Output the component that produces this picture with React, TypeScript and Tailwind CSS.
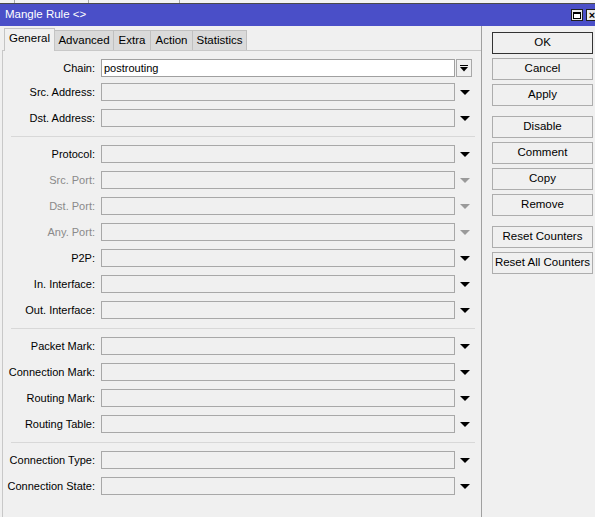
import React from "react";

type Row = { label: string; value?: string; disabled?: boolean; chain?: boolean };

const sections: Row[][] = [
  [
    { label: "Chain:", value: "postrouting", chain: true },
    { label: "Src. Address:" },
    { label: "Dst. Address:" },
  ],
  [
    { label: "Protocol:" },
    { label: "Src. Port:", disabled: true },
    { label: "Dst. Port:", disabled: true },
    { label: "Any. Port:", disabled: true },
    { label: "P2P:" },
    { label: "In. Interface:" },
    { label: "Out. Interface:" },
  ],
  [
    { label: "Packet Mark:" },
    { label: "Connection Mark:" },
    { label: "Routing Mark:" },
    { label: "Routing Table:" },
  ],
  [{ label: "Connection Type:" }, { label: "Connection State:" }],
];

const buttonGroups = [
  ["OK", "Cancel", "Apply"],
  ["Disable", "Comment", "Copy", "Remove"],
  ["Reset Counters", "Reset All Counters"],
];

function Arrow({ disabled }: { disabled?: boolean }) {
  return (
    <svg width="10" height="5" viewBox="0 0 10 5">
      <polygon points="0,0 10,0 5,5" fill={disabled ? "#9a9a9a" : "#000"} />
    </svg>
  );
}

function FieldRow({ row }: { row: Row }) {
  return (
    <div className={`flex h-[18px] items-center ${row.chain ? "mb-[-2px]" : ""}`}>
      <div
        className={`w-[93px] shrink-0 whitespace-nowrap pr-[1px] text-right text-[11px] leading-none ${
          row.disabled ? "text-[#8a8a8a]" : "text-black"
        }`}
      >
        {row.label}
      </div>
      <div
        className={`ml-[5px] flex h-[18px] w-[354px] items-center border px-[2px] text-[11px] ${
          row.chain ? "border-[#a0a0a0] bg-white" : "border-[#a8a8a8] bg-[#f0f0f0]"
        }`}
      >
        {row.value}
      </div>
      {row.chain ? (
        <div className="ml-[1px] flex h-[18px] w-[16px] items-center justify-center border border-[#a8a8a8] bg-[#f0f0f0]">
          <svg width="8" height="7" viewBox="0 0 8 7">
            <rect x="0" y="0" width="8" height="1" fill="#000" />
            <polygon points="0,2 8,2 4,6.5" fill="#000" />
          </svg>
        </div>
      ) : (
        <div className="flex w-[20px] justify-center">
          <Arrow disabled={row.disabled} />
        </div>
      )}
    </div>
  );
}

export default function App() {
  return (
    <div
      className="relative h-[517px] w-[595px] overflow-hidden bg-[#f0f0f0] text-black"
      style={{ fontFamily: '"Liberation Sans", Arial, sans-serif' }}
    >
      {/* top strip of window behind */}
      <div className="flex h-[4px] border-b border-[#4a4a4a] bg-[#f3f3f3]">
        <div className="w-[15px] border-r border-[#a8a8a8]" />
        <div className="w-[74px] border-r border-[#a8a8a8]" />
        <div className="w-[91px] border-r border-[#a8a8a8]" />
      </div>

      {/* title bar */}
      <div className="flex h-[22px] items-center bg-[#4a4fc8] pl-[5px]">
        <span className="text-[11.5px] text-white">Mangle Rule &lt;&gt;</span>
        <div className="ml-auto mr-[-3px] flex gap-[3px]">
          <div className="flex h-[12px] w-[12px] items-center justify-center border border-[#202020] bg-[#ececec]">
            <div className="h-[7px] w-[8px] border border-t-2 border-black bg-white" />
          </div>
          <div className="flex h-[12px] w-[12px] items-center justify-center border border-[#202020] bg-[#ececec] text-[11px] font-bold leading-none">
            ×
          </div>
        </div>
      </div>

      <div className="flex">
        {/* left: tabs and fields */}
        <div className="w-[482px] shrink-0 border-r border-[#a0a0a0] pt-[2px]">
          <div className="flex h-[22px] items-end pl-[4px]">
            <div className="relative z-10 mb-[-1px] flex h-[23px] w-[51px] items-center justify-center border border-b-0 border-[#c4c4c4] bg-[#f0f0f0] pb-[2px] text-[11.5px]">
              General
            </div>
            {[
              ["Advanced", "w-[59px]"],
              ["Extra", "w-[37px]"],
              ["Action", "w-[42px]"],
              ["Statistics", "w-[54px]"],
            ].map(([t, w]) => (
              <div
                key={t}
                className={`flex h-[20px] ${w} items-center justify-center border border-b-0 border-l-0 border-[#c0c0c0] bg-[#dadada] text-[11.5px]`}
              >
                {t}
              </div>
            ))}
          </div>
          <div className="ml-[2px] h-[500px] border-l border-t border-[#c8c8c8] pt-[7px]">
            {sections.map((sec, i) => (
              <div key={i}>
                <div className="flex flex-col gap-[8px] pb-[9px] pt-[1px]">
                  {sec.map((r) => (
                    <FieldRow key={r.label} row={r} />
                  ))}
                </div>
                {i < sections.length - 1 && (
                  <div className="mb-[7px] ml-[8px] mr-[6px] border-t border-[#d8d8d8]" />
                )}
              </div>
            ))}
          </div>
        </div>

        {/* right: buttons */}
        <div className="flex flex-col gap-[10px] pl-[10px] pt-[6px]">
          {buttonGroups.map((g, gi) => (
            <div key={gi} className="flex flex-col gap-[4px]">
              {g.map((b) => (
                <div
                  key={b}
                  className={`flex h-[22px] w-[101px] items-center justify-center whitespace-nowrap border bg-[#f0f0f0] text-[11.5px] ${
                    b === "OK" ? "border-[#333333]" : "border-[#adadad]"
                  }`}
                >
                  {b}
                </div>
              ))}
            </div>
          ))}
        </div>
      </div>
    </div>
  );
}
